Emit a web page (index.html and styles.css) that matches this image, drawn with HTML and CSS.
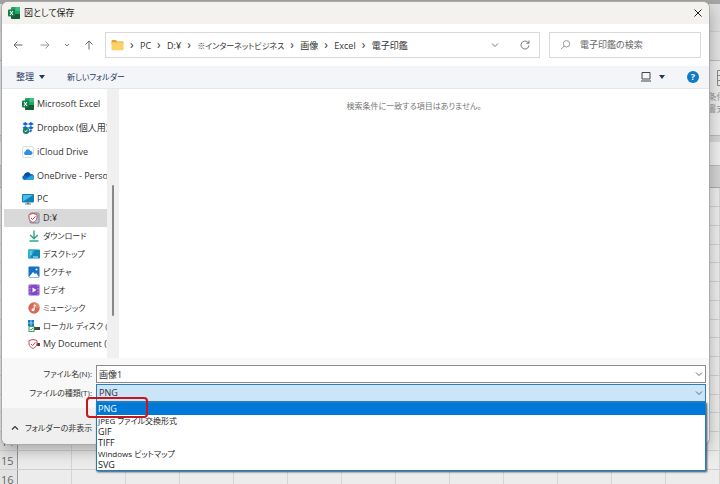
FILE: index.html
```html
<!DOCTYPE html>
<html lang="ja">

<head>
    <meta charset="UTF-8">
    <meta name="viewport" content="width=device-width, initial-scale=1.0">
    <title>図として保存</title>
    <link rel="stylesheet" href="styles.css">
</head>

<body>
    <!--シート-->
    <div class="excel">
        <div class="caption-bar"></div>
        <div class="tab-bar"></div>
        <div class="tool-bar"></div>
        <div class="ribbon">
            <div class="ribbon-item">
                <svg width="18" height="18" viewBox="0 0 18 18" fill="none" stroke="#8a8a8a"><path d="M1.5 1.5h16v15h-16zM1.5 6.5h16M1.5 11.5h16M6.5 1.5v15M12.5 1.5v15"/></svg>
                <span>条件付き<br>書式</span>
            </div>
        </div>
        <div class="ribbon-foot"></div>
        <div class="formula-bar"></div>
        <div class="col-head"></div>
        <div class="sheet">
            <div class="row"></div>
            <div class="row"></div>
            <div class="row"></div>
            <div class="row"></div>
            <div class="row"></div>
            <div class="row"></div>
            <div class="row"></div>
            <div class="row"></div>
            <div class="row"></div>
            <div class="row"></div>
            <div class="row"></div>
            <div class="row"></div>
            <div class="row"></div>
            <div class="row"><span>14</span></div>
            <div class="row"><span>15</span></div>
            <div class="row"><span>16</span></div>
        </div>
    </div>

    <!--ダイアログ-->
    <div class="dialog">
        <div class="title-bar">
            <svg width="12" height="12" viewBox="0 0 12 12"><rect x="3" width="9" height="12" rx="1" fill="#21a366"/><path d="M7.500 0H11a1 1 0 0 1 1 1v3H7.500z" fill="#33c481"/><path d="M3 7h9v4a1 1 0 0 1-1 1H4a1 1 0 0 1-1-1z" fill="#185c37"/><rect y="2.500" width="7" height="7" rx="1" fill="#107c41"/><path d="M2 4l3 4M5 4L2 8" stroke="#fff" stroke-width="1.100"/></svg>
            <h1>図として保存</h1>
            <button class="close" aria-label="閉じる">
                <svg width="8" height="8" viewBox="0 0 8 8" stroke="#222" fill="none"><path d="M.5.5l7 7M7.500.5l-7 7"/></svg>
            </button>
        </div>

        <div class="nav-bar">
            <div class="nav-buttons">
                <button aria-label="戻る"><svg width="10" height="10" viewBox="0 0 10 10" fill="none" stroke="#666"><path d="M9.500 5H1M4.500 1.500L1 5l3.500 3.500"/></svg></button>
                <button aria-label="進む"><svg width="10" height="10" viewBox="0 0 10 10" fill="none" stroke="#999"><path d="M.5 5H9M5.500 1.500L9 5 5.500 8.500"/></svg></button>
                <button aria-label="最近表示した場所"><svg class="small" width="6" height="10" viewBox="0 0 6 10" fill="none" stroke="#777"><path d="M1 4l2 2 2-2"/></svg></button>
                <button aria-label="上へ"><svg width="10" height="10" viewBox="0 0 10 10" fill="none" stroke="#666"><path d="M5 9.500V1M1.500 4.500L5 1l3.500 3.500"/></svg></button>
            </div>
            <div class="address">
                <svg width="13" height="12" viewBox="0 0 13 12"><path d="M.5 2a1 1 0 0 1 1-1h3.200l1.500 1.500h5.300a1 1 0 0 1 1 1V5H.5z" fill="#e3a32b"/><rect x=".5" y="3.300" width="12" height="8" rx="1" fill="#fbd266"/></svg>
                <ol class="crumbs">
                    <li><a href="#">PC</a></li>
                    <li><a href="#">D:¥</a></li>
                    <li><a class="kana" href="#">※インターネットビジネス</a></li>
                    <li><a href="#">画像</a></li>
                    <li><a href="#">Excel</a></li>
                    <li><a href="#">電子印鑑</a></li>
                </ol>
                <button aria-label="以前の場所"><svg width="8" height="8" viewBox="0 0 8 8" fill="none" stroke="#777"><path d="M1 2.500l3 3 3-3"/></svg></button>
                <button aria-label="最新の情報に更新"><svg width="10" height="10" viewBox="0 0 10 10" fill="none" stroke="#777"><path d="M9 5.200A4 4 0 1 1 7.800 2.200L9 3.300M9 .5v2.800H6.200"/></svg></button>
            </div>
            <div class="search">
                <svg width="11" height="10" viewBox="0 0 11 10" fill="none" stroke="#999"><circle cx="6.500" cy="3.800" r="3.200"/><path d="M4.200 6L.8 9.300"/></svg>
                <input type="text" aria-label="検索" placeholder="電子印鑑の検索">
            </div>
        </div>

        <div class="command-bar">
            <button class="organize">整理 <i class="caret"></i></button>
            <button class="kana">新しいフォルダー</button>
            <div class="view-tools">
                <button aria-label="表示方法"><svg width="10" height="10" viewBox="0 0 10 10" fill="none" stroke="#444"><path d="M1 .5h8v6.500H1zM0 9h10"/></svg></button>
                <button aria-label="その他のオプション"><i class="caret"></i></button>
                <button class="help" aria-label="ヘルプ">?</button>
            </div>
        </div>

        <div class="content">
            <ul class="tree">
                <li>
                    <svg width="12" height="12" viewBox="0 0 12 12"><rect x="3" width="9" height="12" rx="1" fill="#21a366"/><path d="M7.500 0H11a1 1 0 0 1 1 1v3H7.500z" fill="#33c481"/><path d="M3 7h9v4a1 1 0 0 1-1 1H4a1 1 0 0 1-1-1z" fill="#185c37"/><rect y="2.500" width="7" height="7" rx="1" fill="#107c41"/><path d="M2 4l3 4M5 4L2 8" stroke="#fff" stroke-width="1.100"/></svg>
                    Microsoft Excel
                </li>
                <li>
                    <svg width="12" height="12" viewBox="0 0 12 12"><path d="M3.300 0l2.900 1.900-2.900 1.900L.4 1.900zM8.900 0l2.900 1.900-2.900 1.900L6 1.900zM3.300 3.900l2.900 1.900-2.900 1.900L.4 5.800zM8.900 3.900l2.900 1.900-2.900 1.900L6 5.800z" fill="#1264d8"/><circle cx="4" cy="8.700" r="3.200" fill="#12806a"/><path d="M2.500 8.700l1.100 1.100 2-2.100" stroke="#fff" fill="none"/><path d="M7 9l2-1.200 1.500 1L8 10.500z" fill="#1264d8"/></svg>
                    Dropbox (個人用)
                </li>
                <li>
                    <svg width="12" height="12" viewBox="0 0 12 12"><rect x=".5" y=".5" width="11" height="11" rx="2" fill="#fff" stroke="#d5dde5"/><path d="M3.500 9a1.900 1.900 0 0 1 0-3.700A2.500 2.500 0 0 1 8.300 5a2 2 0 0 1 .5 4z" fill="#2f8ce8"/></svg>
                    iCloud Drive
                </li>
                <li>
                    <svg width="12" height="12" viewBox="0 0 12 12"><path d="M2.500 10A2.400 2.400 0 0 1 2 5.300 3.600 3.600 0 0 1 8.600 4 3 3 0 0 1 9.500 10z" fill="#0f6cbd"/><path d="M2.500 10L9 5.800a2.300 2.300 0 1 1 .5 4.200z" fill="#28a1ea"/><path d="M2 5.300A3.600 3.600 0 0 1 8.600 4L6 7z" fill="#0a4f9c"/></svg>
                    OneDrive - Personal
                </li>
                <li class="pc">
                    <svg width="12" height="12" viewBox="0 0 12 12"><rect y="1" width="12" height="8.500" rx="1" fill="#157fb5"/><path d="M1 2h10L1 8.500z" fill="#42c3e6"/><path d="M5 9.500h2V11H5zM3 10.500h6v1H3z" fill="#5a7c90"/></svg>
                    PC
                </li>
                <li class="child selected">
                    <svg width="12" height="12" viewBox="0 0 12 12" fill="none"><rect x="2" y="1" width="9" height="10" rx="1" fill="#b7c9d8" stroke="#6d8da6"/><path d="M5 1.500l4 1v3.500c0 2-2 3.500-4 4.500-2-1-4-2.500-4-4.500V2.500z" fill="#fff" stroke="#d64552"/><path d="M3 6l1.600 1.600L7.500 4.200" stroke="#d64552"/></svg>
                    D:¥
                </li>
                <li class="child kana">
                    <svg width="12" height="12" viewBox="0 0 12 12" fill="none" stroke="#2ca58d" stroke-width="1.400"><path d="M6 .5v8M2.200 5L6 8.700 9.800 5M1.500 11h9"/></svg>
                    ダウンロード
                </li>
                <li class="child kana">
                    <svg width="12" height="12" viewBox="0 0 12 12"><rect y="1.500" width="12" height="9" rx="1" fill="#1187b5"/><path d="M1 1.500h6L2 10.500H1a1 1 0 0 1-1-1v-7a1 1 0 0 1 1-1z" fill="#2ab1cf"/><path d="M2 4h1.500M2 6h1.500M5 9h5" stroke="#c8f2fa"/></svg>
                    デスクトップ
                </li>
                <li class="child kana">
                    <svg width="12" height="12" viewBox="0 0 12 12"><rect x=".5" y=".5" width="11" height="11" rx="1" fill="#1671c4"/><path d="M1 11l4-5 2 2 1.200-1L11 11z" fill="#fff"/><circle cx="8.500" cy="3.500" r="1" fill="#fff"/></svg>
                    ピクチャ
                </li>
                <li class="child kana">
                    <svg width="12" height="12" viewBox="0 0 12 12"><rect x=".5" y=".5" width="11" height="11" rx="1" fill="#8147c7"/><path d="M2 1v10M10 1v10" stroke="#c9a5f2" stroke-dasharray="1.500 1.500"/><path d="M4.500 3.500v5l4-2.500z" fill="#fff"/></svg>
                    ビデオ
                </li>
                <li class="child kana">
                    <svg width="12" height="12" viewBox="0 0 12 12"><circle cx="6" cy="6" r="5.700" fill="#d76a56"/><path d="M6 .3A5.700 5.700 0 0 1 11.700 6L6 6z" fill="#e4866a"/><circle cx="5" cy="7.700" r="1.500" fill="#fff"/><path d="M6.200 7.700V2.800L8.200 4" stroke="#fff" fill="none"/></svg>
                    ミュージック
                </li>
                <li class="child kana">
                    <svg width="12" height="12" viewBox="0 0 12 12"><path d="M0 0h2.700v2.700H0zM3.300 0H6v2.700H3.300zM0 3.300h2.700V6H0zM3.300 3.300H6V6H3.300z" fill="#0f78c8"/><rect x="5" y="7" width="7" height="3" fill="#444"/><rect x="1" y="6.500" width="5" height="5" fill="#fff" stroke="#3ba656"/><path d="M2.300 9l1 1 1.500-2" stroke="#3ba656" fill="none"/></svg>
                    ローカル ディスク (C:)
                </li>
                <li class="child">
                    <svg width="12" height="12" viewBox="0 0 12 12" fill="none"><rect x="7" y="5" width="5" height="3" fill="#444"/><path d="M5 1.500l4 1v3.500c0 2-2 3.500-4 4.500-2-1-4-2.500-4-4.500V2.500z" fill="#fff" stroke="#d64552"/><path d="M3 6l1.600 1.600L7.500 4.200" stroke="#d64552"/></svg>
                    My Document (D:)
                </li>
            </ul>
            <div class="scroll"><div class="thumb"></div></div>
            <p class="empty kana">検索条件に一致する項目はありません。</p>
        </div>

        <div class="footer">
            <div class="field">
                <label class="kana" for="fileName">ファイル名(N):</label>
                <div class="box">
                    <input type="text" id="fileName" value="画像1">
                    <svg width="8" height="8" viewBox="0 0 8 8" fill="none" stroke="#666"><path d="M1 2.500l3 3 3-3"/></svg>
                </div>
            </div>
            <div class="field">
                <label class="kana" for="fileType">ファイルの種類(T):</label>
                <div class="box open">
                    <select id="fileType">
                        <option>PNG</option>
                        <option>JPEG ファイル交換形式</option>
                        <option>GIF</option>
                        <option>TIFF</option>
                        <option>Windows ビットマップ</option>
                        <option>SVG</option>
                    </select>
                    <svg width="8" height="8" viewBox="0 0 8 8" fill="none" stroke="#666"><path d="M1 2.500l3 3 3-3"/></svg>
                    <ul class="options" role="listbox" aria-label="ファイルの種類">
                        <li class="current" role="option" aria-selected="true">PNG</li>
                        <li class="kana" role="option">JPEG ファイル交換形式</li>
                        <li role="option">GIF</li>
                        <li role="option">TIFF</li>
                        <li class="kana" role="option">Windows ビットマップ</li>
                        <li role="option">SVG</li>
                    </ul>
                    <div class="marker"></div>
                </div>
            </div>
            <button class="hide-folders kana">
                <svg width="8" height="8" viewBox="0 0 8 8" fill="none" stroke="#333" stroke-width="1.200"><path d="M1 5.500l3-3 3 3"/></svg>
                フォルダーの非表示
            </button>
        </div>
    </div>
</body>

</html>
```
FILE: styles.css
```css
* {
    box-sizing: border-box;
}

body {
    margin: 0;
    min-height: 100vh;
    position: relative;
    overflow: hidden;
    font: 9px/12px "Open Sans", "Noto Sans CJK JP", sans-serif;
    font-feature-settings: "palt";
    color: #333;
}

h1, p, ul, ol {
    margin: 0;
    padding: 0;
    font-size: 9px;
    font-weight: normal;
    list-style: none;
}

button, input, select {
    font: inherit;
    font-feature-settings: inherit;
    color: inherit;
    border: 0;
    padding: 0;
    margin: 0;
    background: none;
    outline: none;
    appearance: none;
}

button {
    display: flex;
    align-items: center;
}

svg {
    display: block;
    flex: none;
}

a {
    color: inherit;
    text-decoration: none;
}

.kana {
    font-size: 8px;
}

/* シート */
.excel {
    height: 100vh;
    overflow: hidden;
    background: #ececec;
}

.caption-bar {
    height: 4px;
    background: #a5a5a5;
}

.tab-bar {
    height: 27px;
    background: #dedede;
}

.tool-bar {
    height: 29px;
    background: #e2e2e2;
    border-top: 1px solid #d0d0d0;
}

.ribbon {
    height: 75px;
    padding-top: 8px;
    background: #ebebeb;
    border-top: 1px solid #bbb;
    display: flex;
    justify-content: flex-end;
}

.ribbon-item {
    display: flex;
    flex-direction: column;
    align-items: center;
    gap: 4px;
    width: 32px;
    margin-right: -21px;
    color: #999;
    white-space: nowrap;
}

.ribbon-foot {
    height: 7px;
    background: #d6d6d6;
    border-top: 1px solid #bbb;
}

.formula-bar {
    height: 23px;
    background: #eee;
}

.col-head {
    height: 23px;
    background: #d3d3d3;
    border-top: 1px solid #bbb;
    border-bottom: 1px solid #aaa;
}

.sheet {
    background: repeating-linear-gradient(to right, transparent 0 53px, #d4d4d4 53px 54px) 18px 0 no-repeat, #ececec;
}

.row {
    height: 19px;
    border-bottom: 1px solid #d0d0d0;
}

.row:nth-child(4n) {
    height: 18px;
}

.row span {
    display: block;
    width: 18px;
    height: 100%;
    background: #e3e3e3;
    border-right: 1px solid #999;
    color: #666;
    font-size: 11px;
    line-height: 19px;
    padding-left: 1px;
}

/* ダイアログ */
.dialog {
    position: absolute;
    top: 2px;
    left: 2px;
    right: 11px;
    background: #fff;
    border-radius: 6px;
    box-shadow: 0 0 0 1px #aaa, 0 6px 16px rgba(0, 0, 0, .3);
}

.title-bar {
    display: flex;
    align-items: center;
    gap: 4px;
    height: 22px;
    padding: 0 7px 0 6px;
    background: #f3f2ee;
    border-radius: 6px 6px 0 0;
    color: #222;
}

.close {
    margin-left: auto;
}

.nav-bar {
    display: flex;
    align-items: center;
    gap: 9px;
    height: 42px;
    padding: 0 8px 0 11px;
}

.nav-buttons {
    display: flex;
    gap: 17px;
    width: 83px;
}

.nav-buttons .small {
    margin: 0 -3px;
}

.address, .search {
    display: flex;
    align-items: center;
    height: 26px;
    border: 1px solid #d9d9d9;
}

.address {
    flex: 1;
    gap: 21px;
    padding: 0 9px 0 5px;
}

.crumbs {
    display: flex;
    flex: 1;
    margin-left: -21px;
    white-space: nowrap;
}

.crumbs li::before {
    content: "›";
    display: inline-block;
    width: 10px;
    margin-left: 6px;
    font-size: 12px;
    line-height: 12px;
}

.search {
    width: 152px;
    gap: 9px;
    padding-left: 10px;
}

.search input {
    width: 100%;
}

.search input::placeholder {
    color: #666;
    opacity: 1;
}

.command-bar {
    display: flex;
    align-items: center;
    gap: 22px;
    height: 23px;
    padding: 0 10px 0 14px;
    background: #f3f5f8;
    border-bottom: 1px solid #e4e6e8;
    color: #1f3a5f;
}

.organize {
    gap: 5px;
}

.caret {
    border: 3px solid transparent;
    border-top: 4px solid #1f3a5f;
    border-bottom: 0;
}

.view-tools {
    display: flex;
    align-items: center;
    gap: 8px;
    margin-left: auto;
}

.help {
    justify-content: center;
    width: 12px;
    height: 12px;
    margin-left: 14px;
    border-radius: 50%;
    background: #0f7ac6;
    color: #fff;
    font-weight: bold;
}

.content {
    display: flex;
    height: 269px;
}

.tree {
    width: 105px;
    padding: 3px 0 0 2px;
    overflow: hidden;
}

.tree li {
    display: flex;
    align-items: center;
    gap: 3px;
    height: 24px;
    padding-left: 18px;
    white-space: nowrap;
    overflow: hidden;
}

.tree .pc {
    height: 21px;
}

.tree .child {
    height: 18px;
    padding-left: 24px;
}

.tree .selected {
    background: #d9d9d9;
}

.scroll {
    width: 12px;
    padding: 96px 5px 0;
    background: #f0f0f0;
}

.thumb {
    height: 131px;
    background: #888;
    border-radius: 1px;
}

.empty {
    flex: 1;
    padding-top: 11px;
    text-align: center;
    color: #777;
}

.footer {
    height: 86px;
    padding: 7px 3px 0 0;
    background: linear-gradient(#f8f8f8 50px, #efefef 50px);
    border-radius: 0 0 6px 6px;
}

.field {
    display: flex;
    align-items: center;
    gap: 4px;
    margin-bottom: 1px;
}

.field label {
    width: 90px;
    text-align: right;
    white-space: nowrap;
}

.box {
    position: relative;
    display: flex;
    align-items: center;
    flex: 1;
    height: 18px;
    padding: 0 2px;
    background: #fff;
    border: 1px solid #8a8a8a;
}

.box input, .box select {
    flex: 1;
    height: 16px;
}

.box.open {
    background: #cce4f7;
    border-color: #2d7eb5;
}

.options {
    position: absolute;
    top: 17px;
    left: -1px;
    right: -1px;
    background: #fff;
    border: 1px solid #1d7fc0;
    box-shadow: 1px 1px 2px #345;
    color: #222;
}

.options li {
    height: 11px;
    padding-left: 1px;
    line-height: 11px;
}

.options .current {
    height: 12px;
    background: #0078d7;
    color: #fff;
}

.marker {
    position: absolute;
    top: 12px;
    left: -11px;
    width: 62px;
    height: 21px;
    border: 2px solid #c8161d;
    border-radius: 4px;
}

.hide-folders {
    gap: 6px;
    margin: 20px 0 0 9px;
}
```
